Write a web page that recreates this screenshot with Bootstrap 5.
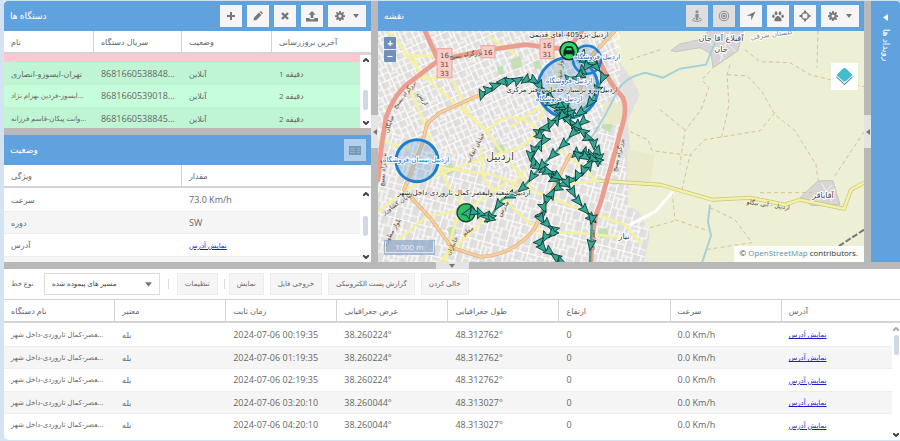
<!DOCTYPE html>
<html lang="fa" dir="ltr">
<head>
<meta charset="utf-8">
<meta name="viewport" content="width=device-width, initial-scale=1">
<title>نقشه</title>
<link rel="stylesheet" href="https://cdn.jsdelivr.net/npm/bootstrap@5.3.0/dist/css/bootstrap.min.css">
<style>
:root { --bar: #5fa2dd; --split: #b9b9b9; --ink: #666; }
body { font: 9px/12px "Open Sans", "DejaVu Sans", sans-serif; color: var(--ink); background: #d3e3f1; }
.app { height: 100vh; padding: 1px 0 1px 4px; }
.upper { flex: 262 1 0; min-height: 0; }
.lower { flex: 171 1 0; min-height: 0; border-radius: 0 0 0 5px; background: #fff; }
.side { flex: 367 1 0; min-width: 0; }
.mapside { flex: 486 1 0; min-width: 0; }
.events { flex: 0 0 29px; background: var(--bar); border-radius: 0 4px 0 0; padding-top: 13px; gap: 8px; color: #fff; }
.vertical { writing-mode: vertical-rl; font-size: 9px; line-height: 14px; }
.pane { flex: 1 1 0; min-height: 0; background: #fff; }
.bar { height: 30px; flex: none; padding: 0 5px 0 6px; gap: 5px; background: var(--bar); color: #fff; }
.bar h2 { font-size: 9px; line-height: 14px; font-weight: 400; }
.side .pane:first-child .bar { border-radius: 4px 0 0 0; }
.tool { width: 22px; height: 22px; padding: 0; border: 0; border-radius: 0; background: #f5f5f5; color: #777; display: inline-flex; align-items: center; justify-content: center; gap: 8px; flex: none; }
.tool.wide { width: 38px; }
.tool.on { background: #dedede; color: #8e8e8e; }
.tool.dim { background: #b0d0ee; color: #7b98b2; }
.split-v { flex: 0 0 7px; background: var(--split); }
.split-h { flex: 0 0 7px; background: var(--split); }
.grip { background: #e4e4e4; color: #777; display: flex; align-items: center; justify-content: center; }
.split-v .grip { height: 33px; width: 7px; }
.split-h .grip { width: 33px; height: 7px; }
.grid { table-layout: fixed; width: 100%; border-collapse: separate; border-spacing: 0; font-size: 8px; }
.grid .num { font-size: 9px; }
.grid .name { font-size: 7px; }
.grid th { height: 23px; font-weight: 400; background: #fff; color: var(--ink); border-bottom: 2px solid #d4d4d4; border-right: 1px solid #d4d4d4; }
.grid th:last-child { border-right: 0; }
.grid th, .grid td { padding: 0 0 0 7px; white-space: nowrap; overflow: hidden; vertical-align: middle; }
.grid td { height: 23px; border-top: 1px solid #ededed; }
.grid tr:nth-child(even) td { height: 22px; background: #f5f5f5; }
.grid tbody tr:first-child td { border-top: 0; }
.grid a { color: #1c1ccf; text-decoration: underline; font-size: 7px; }
.grid.live tbody tr td { background: #c6fddb; border: 0; }
.grid.live tbody tr:nth-child(even) td { background: #bff5d4; height: 23px; }
.grid.live tbody tr:nth-child(3) td { height: 22px; }
.grid.live tbody tr.off td { background: #ffc8d0; height: 8px; }
.scrollbar { position: absolute; right: 0; top: 24px; bottom: 0; width: 11px; background: #fff; display: flex; flex-direction: column; align-items: center; padding: 3px 0; color: #444; }
.lower .scrollbar { width: 8px; }
.thumb { width: 5px; height: 20px; border-radius: 2px; background: #cfd8e3; }
.chev { width: 6px; height: 4px; fill: none; stroke: currentColor; stroke-width: 2; }
.strip { height: 30px; flex: none; padding: 0 7px; background: #fff; font-size: 7px; }
.strip label { width: 33px; }
.pick { width: 116px; height: 22px; }
.pick select { appearance: none; width: 100%; height: 22px; padding: 0 24px 0 7px; border: 1px solid #dcdcdc; border-radius: 0; background: #fff; color: #444; font: inherit; }
.pick svg { position: absolute; right: 8px; top: 9px; pointer-events: none; }
.act { height: 22px; border: 1px solid #ececec; border-radius: 0; background: #f5f5f5; color: var(--ink); font: inherit; padding: 0 7px; margin-right: 6px; white-space: nowrap; }
.bit { width: 1px; height: 10px; background: #ddd; }
.headed { border-top: 1px solid #d4d4d4; }
.map { background: #eef0d5; min-height: 0; }
.map > svg { position: absolute; width: 100%; height: 100%; }
.zoomer { position: absolute; left: 6px; top: 6px; gap: 1px; }
.zoomer button { width: 12px; height: 12px; padding: 0; border: 0; border-radius: 1px; background: #6f8fbe; color: #fff; font: bold 10px/12px "Open Sans", sans-serif; }
.layers { position: absolute; right: 6px; top: 32px; width: 27px; height: 27px; padding: 0; border: 0; background: #fff; }
.scale { position: absolute; left: 6px; bottom: 7px; width: 51px; height: 15px; padding: 1px; background: #8ba5cab3; color: #eee; text-align: center; font-size: 8px; }
.scale div { border: 1px solid #dde6f0; border-top: 0; line-height: 11px; height: 12px; }
.credit { position: absolute; right: 0; bottom: 0; padding: 1px 6px 3px 5px; background: #ffffffd9; color: #333; font-size: 8px; line-height: 12px; }
.credit a { color: #5b93ac; text-decoration: none; }
.place { font: 8px "DejaVu Sans", sans-serif; fill: #444; stroke: #fff; stroke-width: 2; paint-order: stroke; text-anchor: middle; direction: ltr; }
.device { font: 7px "DejaVu Sans", sans-serif; fill: #222; stroke-width: 1; }
.zone { fill: #1a6dc4; stroke-width: 2; }
.road { font-size: 6px; fill: #5c4a30; stroke: none; }
.shield rect { fill: #f8cdc7; stroke: #e9a39b; }
.shield text { font: 7px "DejaVu Sans", sans-serif; fill: #6b3f3a; text-anchor: middle; }
</style>
<script src="https://cdn.jsdelivr.net/npm/bootstrap@5.3.0/dist/js/bootstrap.bundle.min.js"></script>
</head>
<body>
<svg width="0" height="0" class="position-absolute" aria-hidden="true">
  <symbol id="caret" viewBox="0 0 6 4"><path d="M0 0h6L3 4z" fill="currentColor"/></symbol>
  <symbol id="up" viewBox="0 0 6 4"><path d="M0 4l3-3 3 3"/></symbol>
  <symbol id="down" viewBox="0 0 6 4"><path d="M0 0l3 3 3-3"/></symbol>
  <symbol id="gear" viewBox="0 0 16 16"><circle cx="8" cy="8" r="4.2" fill="none" stroke="currentColor" stroke-width="3.2"/><path d="M8 0v4M8 12v4M0 8h4M12 8h4M2.3 2.3l2.9 2.9M10.8 10.8l2.9 2.9M2.3 13.7l2.9-2.9M10.8 5.2l2.9-2.9" stroke="currentColor" stroke-width="2.8"/></symbol>
</svg>
<div class="app d-flex flex-column">
  <div class="upper d-flex">
    <div class="side d-flex flex-column">
      <section class="pane d-flex flex-column">
        <div class="bar d-flex align-items-center">
          <h2 class="m-0 me-auto">دستگاه ها</h2>
          <button class="tool" aria-label="افزودن"><svg width="10" height="10" viewBox="0 0 10 10"><path d="M5 1v8M1 5h8" stroke="currentColor" stroke-width="2"/></svg></button>
          <button class="tool" aria-label="ویرایش"><svg width="10" height="10" viewBox="0 0 10 10"><path d="M.5 9.5l.6-3L6 1.6l2.4 2.4-4.9 4.9zM6.7 1l.8-.7q.4-.3.8 0l1.4 1.4q.3.4 0 .8l-.7.8z" fill="currentColor"/></svg></button>
          <button class="tool" aria-label="حذف"><svg width="8" height="8" viewBox="0 0 8 8"><path d="M1 1l6 6M7 1L1 7" stroke="currentColor" stroke-width="2.4"/></svg></button>
          <button class="tool" aria-label="بارگذاری"><svg width="12" height="11" viewBox="0 0 12 11"><path d="M6 0l3.6 3.7H7.3V7H4.7V3.7H2.4zM0 7h3.8v1.2h4.4V7H12v3.6H0z" fill="currentColor"/></svg></button>
          <button class="tool wide" aria-label="تنظیمات دستگاه"><svg width="10" height="10"><use href="#gear"/></svg><svg width="6" height="4"><use href="#caret"/></svg></button>
        </div>
        <div class="position-relative overflow-hidden flex-fill">
          <table class="grid live">
            <colgroup><col style="width:24.5%"><col style="width:24%"><col style="width:24.5%"><col></colgroup>
            <thead><tr><th>نام</th><th>سریال دستگاه</th><th>وضعیت</th><th>آخرین بروزرسانی</th></tr></thead>
            <tbody>
              <tr class="off"><td></td><td></td><td></td><td></td></tr>
              <tr><td>تهران-ایسوزو-انصاری</td><td class="num">8681660538848...</td><td>آنلاین</td><td>1 دقیقه</td></tr>
              <tr><td class="name">ایسوز-فردین بهزام نژاد...</td><td class="num">8681660539018...</td><td>آنلاین</td><td>2 دقیقه</td></tr>
              <tr><td class="name">وانت پیکان-قاسم فرزانه...</td><td class="num">8681660538845...</td><td>آنلاین</td><td>2 دقیقه</td></tr>
            </tbody>
          </table>
          <div class="scrollbar"><svg class="chev"><use href="#up"/></svg><div class="my-auto"><div class="thumb mt-3"></div></div><svg class="chev"><use href="#down"/></svg></div>
        </div>
      </section>
      <div class="split-h"></div>
      <section class="pane d-flex flex-column">
        <div class="bar d-flex align-items-center">
          <h2 class="m-0 me-auto">وضعیت</h2>
          <button class="tool dim" aria-label="جزئیات"><svg width="12" height="9" viewBox="0 0 12 9"><path d="M0 0h12v9H0z" fill="currentColor"/><path d="M1 2.5h5M1 4.5h5M1 6.5h5M8 2.5h3M8 4.5h3M8 6.5h3" stroke="#a9c8e4" stroke-width=".5"/></svg></button>
        </div>
        <div class="position-relative overflow-hidden flex-fill">
          <table class="grid">
            <colgroup><col style="width:48.5%"><col></colgroup>
            <thead><tr><th>ویژگی</th><th>مقدار</th></tr></thead>
            <tbody>
              <tr><td>سرعت</td><td class="num">73.0 Km/h</td></tr>
              <tr><td>دوره</td><td class="num">SW</td></tr>
              <tr><td>آدرس</td><td><a href="#">نمایش آدرس</a></td></tr>
              <tr><td></td><td></td></tr>
            </tbody>
          </table>
          <div class="scrollbar"><svg class="chev"><use href="#up"/></svg><div class="my-auto"><div class="thumb"></div></div><svg class="chev"><use href="#down"/></svg></div>
        </div>
      </section>
    </div>
    <div class="split-v d-flex align-items-center"><div class="grip"><svg width="4" height="6" viewBox="0 0 4 6"><path d="M4 0v6L0 3z" fill="currentColor"/></svg></div></div>
    <section class="mapside d-flex flex-column">
      <div class="bar d-flex align-items-center">
        <h2 class="m-0 me-auto">نقشه</h2>
        <button class="tool on" aria-label="نمای خیابان"><svg width="10" height="12" viewBox="0 0 10 12"><circle cx="5" cy="1.8" r="1.6" fill="currentColor"/><path d="M3.3 4h3.4v3.2H6.2V10H3.8V7.2H3.3z" fill="currentColor"/><path d="M3 8.3C-1 9 0 11.3 5 11.3S11 9 7 8.3" fill="none" stroke="currentColor"/></svg></button>
        <button class="tool on" aria-label="هدف"><svg width="12" height="12" viewBox="0 0 12 12" fill="none" stroke="currentColor"><circle cx="6" cy="6" r="4.8"/><circle cx="6" cy="6" r="2.7"/><circle cx="6" cy="6" r="1" fill="currentColor"/></svg></button>
        <button class="tool" aria-label="دنبال کردن"><svg width="10" height="10" viewBox="0 0 10 10"><path d="M9.5.5L5.2 9.5V4.8H.5z" fill="currentColor"/></svg></button>
        <button class="tool" aria-label="ردیابی"><svg width="12" height="11" viewBox="0 0 12 11" fill="currentColor"><ellipse cx="4" cy="2.2" rx="1.3" ry="2"/><ellipse cx="8" cy="2.2" rx="1.3" ry="2"/><ellipse cx="1.4" cy="5.2" rx="1.2" ry="1.7"/><ellipse cx="10.6" cy="5.2" rx="1.2" ry="1.7"/><path d="M6 5c1.8 0 3.600 2.600 3.600 4.200S7.500 10.200 6 10.200s-3.600.6-3.600-1S4.200 5 6 5z"/></svg></button>
        <button class="tool" aria-label="موقعیت"><svg width="12" height="12" viewBox="0 0 12 12"><circle cx="6" cy="6" r="3.4" fill="none" stroke="currentColor" stroke-width="1.3"/><path d="M6 .5v3M6 8.5v3M.5 6h3M8.5 6h3" stroke="currentColor" stroke-width="2"/></svg></button>
        <button class="tool wide" aria-label="تنظیمات نقشه"><svg width="10" height="10"><use href="#gear"/></svg><svg width="6" height="4"><use href="#caret"/></svg></button>
      </div>
      <div class="map position-relative overflow-hidden flex-fill">
        <svg viewBox="378 31 486 232" preserveAspectRatio="xMidYMid slice" role="img" aria-label="اردبیل">
          <defs>
            <pattern id="blocks" width="25" height="21" patternUnits="userSpaceOnUse" patternTransform="rotate(-24)"><path d="M0 .5h25M0 6h13M13 8h12M4 14h21M0 17h9M.5 0v21M6 0v14M13 0v21M19 8v13M22 0v8M9 14v7" fill="none" stroke="#fff" stroke-width="1.2"/><path d="M16 0v8M3 6v8M11 14v7" stroke="#d3d1d1" stroke-width=".5"/></pattern>
            <pattern id="blocks2" width="23" height="27" patternUnits="userSpaceOnUse" patternTransform="rotate(15)"><path d="M0 .5h23M0 5h10M8 10h15M0 15h15M8 21h15M.5 0v27M5 5v10M10 0v15M15 10v17M19 0v10M8 15v12" fill="none" stroke="#fff" stroke-width="1.2"/><path d="M3 15v12M13 0v10M19 10v11" stroke="#d5d3d3" stroke-width=".5"/></pattern>
            <path id="nav" d="M6 0L-5 4.5L-3 0L-5-4.5Z" fill="#35a795" stroke="#0e3a34" stroke-width=".8" stroke-linejoin="round"/>
          </defs>
          <path d="M378 31H612L616 58L630 76L640 95L628 120L630 150L628 205L640 213L650 235L644 263H378Z" fill="#e2e0de"/>
          <path d="M378 31H620V120L530 180L378 130Z" fill="url(#blocks)"/>
          <path d="M378 128L530 180L620 118L630 205L648 230L644 263H378Z" fill="url(#blocks2)"/>
          <g fill="#c4dfb6"><path d="M510 60l10-4 3 11-10 3zM497 67l6-1 1 8-6 1zM443 168l8-5 5 8-9 5zM447 229l7-3 3 8-7 3zM606 118l8 3-4 12-9-5zM494 147l9-3 3 8-9 3zM598 230l9-2 2 9-9 2zM533 62l6-2 3 8-7 2zM461 206l8-4 4 6-9 4z"/></g>
          <path d="M604 102L622 103L622 125L602 124ZM628 150L655 155L650 182L627 181Z" fill="#e9eacb"/>
          <path d="M671 51L680 44L700 40L709 31H743L738 51L725 60L713 68L711 54L700 48L676 52ZM818 181H833L840 205L812 206L800 198Z" fill="#d9d5d6" stroke="#bcb8b9" stroke-width=".7"/>
          <path d="M718 34l18 18M710 43l14 16M730 32l-10 30M822 184l10 18M832 185l-14 16" stroke="#f6f4f4" fill="none"/>
          <g fill="none" stroke="#d9bf93" stroke-width="1" stroke-dasharray="4 3">
            <path d="M745 50L760 62L790 63L810 75L830 80L864 87M818 31L817 68M715 66L702 80L709 88L701 110L685 131L680 165M730 65L727 75L729 105L721 140M727 75L747 76L762 92L775 115L795 131L816 165L818 180M775 113L760 131L705 140L690 155L682 190M660 110L686 131M630 132L648 140L652 151L692 156M864 132L835 176M760 193H812M672 192L675 220L705 230M710 208L735 220L752 243L705 250M650 228L675 221M630 60L660 50"/>
          </g>
          <g fill="none" stroke="#a5d2d8" stroke-width="2"><path d="M590 140Q605 118 618 90Q625 78 645 73Q657 76 663 78L680 69L706 65Q712 50 715 43M710 205L708 222L711 236L702 263"/></g>
          <path d="M673 192L655 212L630 225" fill="none" stroke="#fff" stroke-width="3"/>
          <path d="M864 230L838 247" stroke="#777" stroke-width="2" stroke-dasharray="6 2"/>
          <g fill="none" stroke-linejoin="round" stroke-linecap="round">
            <path d="M600 181L660 185L712 200L750 198L785 205L800 200L844 209L851 190L864 183" stroke="#c9c486" stroke-width="4"/>
            <path d="M388 31L402 48L415 66L437 88L460 108L488 133L505 157L530 186M405 56H440M413 57L422 78L442 78M440 62L456 86L470 116L488 132M407 84L418 108L430 140L437 160L450 190L466 208M488 132Q500 115 518 118T545 145M378 140L410 150M378 212Q405 190 425 180L470 163L520 148L556 118M510 128L548 102M600 181L660 185L712 200L750 198L785 205L800 200L844 209L851 190L864 183M384 252L425 218L470 208L505 184M445 263L456 220L468 212M440 168L492 175L556 200L592 215M480 150L484 180L520 215L545 235M552 232L590 234L620 238M600 216L625 225L640 243M560 150L585 170L596 181M488 37L515 54M546 31L560 68L540 120M440 262L500 205L524 170M570 184L600 181" stroke="#f4f1a2" stroke-width="2.6"/>
            <path d="M478 96L440 113L427 124L422 145L404 190L430 218L452 248L480 257Q512 256 534 230L545 205L570 155M615 31L590 58L580 90" stroke="#dfa974" stroke-width="3.6"/>
            <path d="M478 96L440 113L427 124L422 145L404 190L430 218L452 248L480 257Q512 256 534 230L545 205L570 155M615 31L590 58L580 90" stroke="#f7cf9f" stroke-width="2.4"/>
            <path d="M425 31L438 60M378 180L381 150L386 118Q395 92 412 81L437 62L460 56L490 50L525 45L560 49L600 62Q610 85 623 98Q628 110 621 130L613 160L600 205Q592 220 591 263M582 31L568 50" stroke="#ea9e90" stroke-width="4.8"/>
          </g>
          <g class="shield"><rect x="437" y="49" width="15" height="29"/><text x="444.5" y="58">16</text><text x="444.5" y="67">31</text><text x="444.5" y="76">33</text><rect x="481" y="46" width="14" height="12"/><text x="488" y="55">16</text><rect x="540" y="39" width="14" height="20"/><text x="547" y="48">16</text><text x="547" y="57">31</text></g>
          <g class="place road"><text transform="translate(466 57) rotate(-8)">بزرگراه بسیج</text><text transform="translate(406 96) rotate(-52)">بزرگراه بسیج</text><text transform="translate(391 125) rotate(-72)">شاپگان</text><text transform="translate(385 170) rotate(-86)">بزرگراه بسیج</text><text transform="translate(620 156) rotate(-76)">بزرگراه بسیج</text><text transform="translate(594 240) rotate(-88)">کمربندی</text><text transform="translate(477 149) rotate(-62)">خیابان انقلاب</text><text transform="translate(399 205) rotate(-34)">خیابان کشاورز</text><text transform="translate(393 234) rotate(-60)">بلوار مطهری</text><text transform="translate(469 233) rotate(-35)">معلم</text><text transform="translate(454 247) rotate(-65)">جانبازان</text><text transform="translate(421 100) rotate(60)">ارتش</text><text transform="translate(562 70) rotate(-85)">بلوار شهدا</text><text transform="translate(505 210) rotate(-60)">مدرس</text><text transform="translate(768 207) rotate(8)">اردبیل - آبی بیگلو</text></g>
          <g class="place"><text x="500" y="160" style="font-size:11px">اردبیل</text><text x="721" y="41">آقبلاغ آقا جان</text><text x="721" y="52">جان</text><text transform="translate(772 37) rotate(-8)" style="fill:#88848a;font-size:7px">گلستان شرقی</text><text x="823" y="198">آقاباقر</text><text x="624" y="239">نیار</text></g>
          <g fill="#4a90d540" stroke="#1c7fd0"><circle cx="417" cy="161" r="21" stroke-width="3"/><circle cx="568" cy="88" r="30" stroke-width="3"/><circle cx="587" cy="60" r="14" stroke-width="2.5"/></g>
          <circle cx="466" cy="213" r="9" fill="#31bd64" stroke="#174a2b" stroke-width="1.5"/>
          <g id="tracks" fill="none" stroke="#3aa392" stroke-width="2.4"></g>
          <g id="arrows"></g>
          <circle cx="569" cy="51" r="9" fill="#35d36b" stroke="#12331d" stroke-width="1.5"/>
          <path d="M563.5 55V51.5L565 48Q565.5 46.5 567 46.5H571Q572.5 46.5 573 48L574.5 51.5V56H572.5V54.5H565.5V56H563.5ZM566 50.5H572L571.3 48.3H566.7Z" fill="#10251a" fill-rule="evenodd"/>
          <g class="place device"><text x="569" y="37">اردبیل-پژو405-آقای قدیمی</text><text x="562" y="92">اردبیل-پژو پرسپار-خدمات-دفتر مرکزی</text><text x="464" y="195">اردبیل-شعبه ولیعصر-کمال تاروردی-داخل شهر</text></g>
          <g class="place device zone"><text x="416" y="162">اردبیل-نیسان-فروشگاه</text><text x="597" y="59">اردبیل-فروشگاه</text><text x="569" y="83">اردبیل-فروشگاه</text><text x="559" y="101">اردبیل-فروشگاه</text></g>
        </svg>
        <div class="zoomer d-flex flex-column"><button aria-label="بزرگنمایی">+</button><button aria-label="کوچکنمایی">−</button></div>
        <button class="layers" aria-label="لایه ها"><svg width="19" height="19" viewBox="0 0 19 19"><path d="M1 10L9.5 18L18 10L16 8H3z" fill="#336471"/><path d="M1 9L9.5 17L18 9L16 8H3z" fill="#e9fbfc"/><path d="M1.5 8L8 1.6Q9.5.5 11 1.6L17.5 8L11 14Q9.5 15 8 14z" fill="#45bccd"/></svg></button>
        <div class="scale"><div>1000 m</div></div>
        <div class="credit">© <a href="#">OpenStreetMap</a> contributors.</div>
      </div>
    </section>
    <div class="split-v d-flex align-items-center"><div class="grip"><svg width="4" height="6" viewBox="0 0 4 6"><path d="M4 0v6L0 3z" fill="currentColor"/></svg></div></div>
    <aside class="events d-flex flex-column align-items-center"><svg width="5" height="7" viewBox="0 0 5 7"><path d="M5 0v7L0 3.5z" fill="#fff"/></svg><span class="vertical">رویداد ها</span></aside>
  </div>
  <div class="split-h d-flex justify-content-center"><div class="grip"><svg width="6" height="4"><use href="#caret"/></svg></div></div>
  <section class="lower d-flex flex-column overflow-hidden">
    <div class="strip d-flex align-items-center">
      <label for="kind">نوع خط</label>
      <div class="pick position-relative me-1"><select id="kind"><option>مسیر های پیموده شده</option></select><svg width="7" height="5" color="#777"><use href="#caret"/></svg></div>
      <span class="bit mx-1"></span><button class="act ms-1">تنظیمات</button><span class="bit me-1"></span><button class="act">نمایش</button><button class="act">خروجی فایل</button><button class="act">گزارش پست الکترونیکی</button><button class="act">خالی کردن</button>
    </div>
    <div class="headed position-relative overflow-hidden flex-fill">
      <table class="grid">
        <colgroup><col span="7" style="width:12.4%"><col></colgroup>
        <thead><tr><th>نام دستگاه</th><th>معتبر</th><th>زمان ثابت</th><th>عرض جغرافیایی</th><th>طول جغرافیایی</th><th>ارتفاع</th><th>سرعت</th><th>آدرس</th></tr></thead>
        <tbody>
          <tr><td class="name">&zwj;عصر-کمال تاروردی-داخل شهر...</td><td>بله</td><td class="num">2024-07-06 00:19:35</td><td class="num">38.260224°</td><td class="num">48.312762°</td><td class="num">0</td><td class="num">0.0 Km/h</td><td><a href="#">نمایش آدرس</a></td></tr>
          <tr><td class="name">&zwj;عصر-کمال تاروردی-داخل شهر...</td><td>بله</td><td class="num">2024-07-06 01:19:35</td><td class="num">38.260224°</td><td class="num">48.312762°</td><td class="num">0</td><td class="num">0.0 Km/h</td><td><a href="#">نمایش آدرس</a></td></tr>
          <tr><td class="name">&zwj;عصر-کمال تاروردی-داخل شهر...</td><td>بله</td><td class="num">2024-07-06 02:19:35</td><td class="num">38.260224°</td><td class="num">48.312762°</td><td class="num">0</td><td class="num">0.0 Km/h</td><td><a href="#">نمایش آدرس</a></td></tr>
          <tr><td class="name">&zwj;عصر-کمال تاروردی-داخل شهر...</td><td>بله</td><td class="num">2024-07-06 03:20:10</td><td class="num">38.260044°</td><td class="num">48.313027°</td><td class="num">0</td><td class="num">0.0 Km/h</td><td><a href="#">نمایش آدرس</a></td></tr>
          <tr><td class="name">&zwj;عصر-کمال تاروردی-داخل شهر...</td><td>بله</td><td class="num">2024-07-06 04:20:10</td><td class="num">38.260044°</td><td class="num">48.313027°</td><td class="num">0</td><td class="num">0.0 Km/h</td><td><a href="#">نمایش آدرس</a></td></tr>
        </tbody>
      </table>
      <div class="scrollbar"><svg class="chev" color="#aaa"><use href="#up"/></svg><div class="thumb mt-1 mb-auto"></div><svg class="chev"><use href="#down"/></svg></div>
    </div>
  </section>
</div>
<script>
// Each track: spacing between direction arrows, then its points.
const tracks = [
  [8, [482,95, 492,88, 502,82, 522,80, 535,81, 545,92, 556,104, 568,118]],
  [14, [585,60, 592,62, 604,76, 591,102, 575,118]],
  [6, [583,56, 592,63, 583,69, 578,79, 568,80]],
  [6, [546,100, 556,107, 565,104, 572,114, 559,112, 570,122, 580,130]],
  [7, [562,116, 548,126, 537,134, 545,140, 530,155, 536,166, 549,172, 558,184]],
  [15, [583,122, 566,142, 550,158, 540,168, 521,190, 502,200, 490,218]],
  [6, [490,219, 478,212, 468,213, 470,208]],
  [8, [578,126, 588,138, 597,148, 600,163, 588,153, 573,154, 585,157, 594,160, 580,175, 566,183, 556,189, 545,202, 541,219]],
  [8, [541,219, 556,232, 540,240, 539,246, 551,253, 562,263]],
  [11, [548,172, 566,181, 577,200, 592,219]],
  [26, [592,219, 590,263]]
];
let lines = '', arrows = '', n = 0;
tracks.forEach(([gap, p]) => {
  lines += `<polyline points="${p.join(' ')}"/>`;
  let rest = 0;
  for (let i = 2; i < p.length; i += 2) {
    const dx = p[i] - p[i-2], dy = p[i+1] - p[i-1], len = Math.hypot(dx, dy), a = Math.atan2(dy, dx) * 180 / Math.PI;
    for (; rest < len; rest += gap, n++) {
      const turn = (n * 67 % 80) - 40 + (gap < 11 && n % 3 == 0 ? 180 : 0);
      arrows += `<use href="#nav" transform="translate(${p[i-2] + dx*rest/len} ${p[i-1] + dy*rest/len}) rotate(${a + (gap > 10 ? turn / 4 : turn)})"/>`;
    }
    rest -= len;
  }
});
document.getElementById('tracks').innerHTML = lines;
document.getElementById('arrows').innerHTML = arrows;
</script>
</body>
</html>
